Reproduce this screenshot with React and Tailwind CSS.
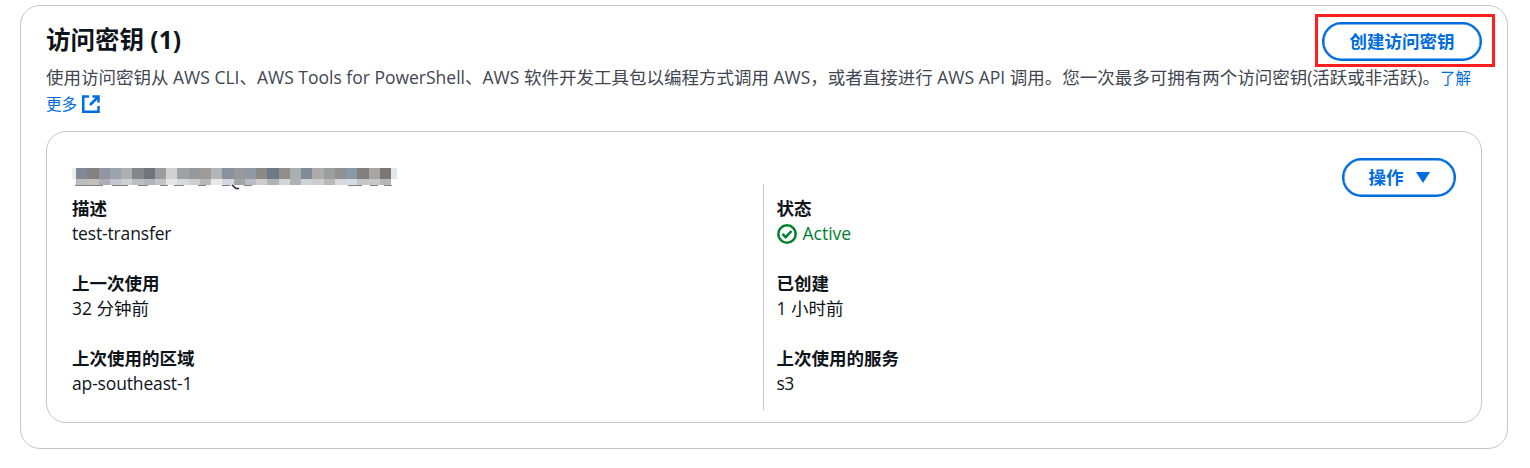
const FONT = "font-['Open_Sans','Noto_Sans_CJK_SC',sans-serif]";

const MOSAIC_TOP = [
  "bg-[#7f8a98]", "bg-[#84807f]", "bg-[#9495a2]", "bg-[#9ba3ac]", "bg-[#adafb1]", "bg-[#83878c]", "bg-[#6f747d]", "bg-[#9a9d9f]",
  "bg-[#d2d1cf]", "bg-[#9ea2a5]", "bg-[#979a9c]", "bg-[#9d9c9a]", "bg-[#b2b6b6]", "bg-[#87929c]", "bg-[#96999c]", "bg-[#8f99a4]",
  "bg-[#8d8986]", "bg-[#6d7a8a]", "bg-[#918f8c]", "bg-[#abafaf]", "bg-[#808c9a]", "bg-[#aeaca9]", "bg-[#9a9ea1]", "bg-[#8e9092]",
  "bg-[#8999a9]", "bg-[#82807f]", "bg-[#a7a6a2]", "bg-[#7e7670]",
];
const MOSAIC_BOTTOM = [
  "bg-[#bcbcbd]", "bg-[#c2c0bc]", "bg-[#aeadb6]", "bg-[#c4c6cb]", "bg-[#cfd0d2]", "bg-[#bcbdc0]", "bg-[#b2b4b8]", "bg-[#c2c3c4]",
  "bg-[#e6e6e6]", "bg-[#d6d9de]", "bg-[#ccced2]", "bg-[#b8b8b8]", "bg-[#e8e9e8]", "bg-[#d4d8de]", "bg-[#a3a4a6]", "bg-[#b8bcc4]",
  "bg-[#cdcdcd]", "bg-[#afb1b5]", "bg-[#d4d5d6]", "bg-[#aeb0b2]", "bg-[#cfd2d6]", "bg-[#cdcdcd]", "bg-[#b6b8ba]", "bg-[#d8d9da]",
  "bg-[#d8dce2]", "bg-[#c6c6c6]", "bg-[#c8c8c8]", "bg-[#b6b6b6]",
];

function Mosaic() {
  return (
    <div className="h-[18px] w-[325px] flex flex-col relative">
      <div className="flex h-[11px]">
        <div className="w-[4px] shrink-0 bg-[#efedea]" />
        {MOSAIC_TOP.map((c, i) => (
          <div key={i} className={`w-[11.25px] shrink-0 ${c}`} />
        ))}
        <div className="w-[6px] shrink-0 bg-[#e1e7ed]" />
      </div>
      <div className="flex h-[6px] ml-[2px]">
        <div className="w-[2px] shrink-0 bg-[#f2f2f2]" />
        {MOSAIC_BOTTOM.map((c, i) => (
          <div key={i} className={`w-[11.25px] shrink-0 ${c}`} />
        ))}
      </div>
      <svg className="absolute left-0 top-[16px]" width="325" height="6" viewBox="0 0 325 6">
        <path d="M3 1.5h28M40 1.5h16M66 1.5h10M88 1.5h8M102 1.5h10M126 1.5h8M150 1.5h8M172 1.5h8" stroke="#1a1a1a" strokeWidth="1" opacity="0.55" />
        <path d="M160 1l4 3.5h3" stroke="#1a2330" strokeWidth="1.6" fill="none" />
        <path d="M276 1.5h14M298 1.5h8M312 1.5h8" stroke="#1a1a1a" strokeWidth="1" opacity="0.55" />
      </svg>
    </div>
  );
}

function Field({ label, children }) {
  return (
    <div className="leading-[25px]">
      <div className="font-bold text-[#0f141a]">{label}</div>
      <div className="text-[#0f141a]">{children}</div>
    </div>
  );
}

export default function App() {
  return (
    <div className={`${FONT} bg-white w-[1530px] h-[468px] pt-[5px] pl-[20px] text-[17.5px] relative`}>
      <div className="w-[1488px] h-[444px] rounded-[20px] border border-[#c6c6cd] px-[25px] pt-[14px]">
        <div className="flex justify-between items-start">
          <h2 className="text-[24.5px] font-bold leading-[40px] text-[#0f141a]">访问密钥 (1)</h2>
          <button className="mt-[2px] h-[39px] w-[160px] rounded-full border-[2px] border-[#006ce0] shadow-[inset_0_0_0_0.5px_#006ce0] text-[#006ce0] font-bold leading-none">
            创建访问密钥
          </button>
        </div>
        <p className="mt-[3px] text-[#424650] leading-[26px] text-[17.5px] w-[1432px]">
          使用访问密钥从 AWS CLI、AWS Tools for PowerShell、AWS 软件开发工具包以编程方式调用 AWS，或者直接进行 AWS API 调用。您一次最多可拥有两个访问密钥(活跃或非活跃)。
          <a className="text-[#006ce0] text-[15.5px] leading-none">了解</a>
          <br />
          <a className="text-[#006ce0] text-[15.5px] leading-none">更多</a>
          <svg className="inline-block ml-[5px] align-[-3px]" width="18" height="18" viewBox="0 0 18 18" fill="none" stroke="#006ce0" strokeWidth="2.5">
            <path d="M7 1.5H1.25v15.25h15.25V11" />
            <path d="M10.5 1.5h6v6" />
            <path d="M16 2L8 10" />
          </svg>
        </p>
        <div className="mt-[15px] h-[292px] rounded-[20px] border border-[#c6c6cd] pl-[25px] pr-[25px] pt-[36px] relative">
          <div className="absolute right-[25px] top-[26px]">
            <button className="h-[39px] w-[114px] rounded-full border-[2px] border-[#006ce0] shadow-[inset_0_0_0_0.5px_#006ce0] text-[#006ce0] font-bold flex items-center justify-center gap-[12px]">
              操作
              <svg width="14" height="11" viewBox="0 0 14 11"><path d="M0 0h14L7 11z" fill="#006ce0" /></svg>
            </button>
          </div>
          <Mosaic />
          <div className="grid grid-cols-2 h-[226px] -mt-[2px]">
            <div className="flex flex-col gap-[25px] pt-[12px]">
              <Field label="描述"><span className="tracking-[-0.15px]">test-transfer</span></Field>
              <Field label="上一次使用">32 分钟前</Field>
              <Field label="上次使用的区域"><span className="tracking-[-0.15px]">ap-southeast-1</span></Field>
            </div>
            <div className="flex flex-col gap-[25px] pt-[12px] border-l border-[#c6c6cd] pl-[12.5px] ml-[-1px]">
              <Field label="状态">
                <span className="flex items-center gap-[6px] text-[#00802f]">
                  <svg width="20" height="20" viewBox="0 0 20 20" fill="none" stroke="#00802f" strokeWidth="2.5">
                    <circle cx="10" cy="10" r="8.7" />
                    <path d="M5.5 10l3.2 3.2 5.8-6.2" strokeWidth="2.5" />
                  </svg>
                  Active
                </span>
              </Field>
              <Field label="已创建">1 小时前</Field>
              <Field label="上次使用的服务"><span className="tracking-[-0.5px]">s3</span></Field>
            </div>
          </div>
        </div>
      </div>
      <div className="absolute left-[1315px] top-[14px] w-[180px] h-[53px] border-[3px] border-[#ff1f1f]" />
    </div>
  );
}
